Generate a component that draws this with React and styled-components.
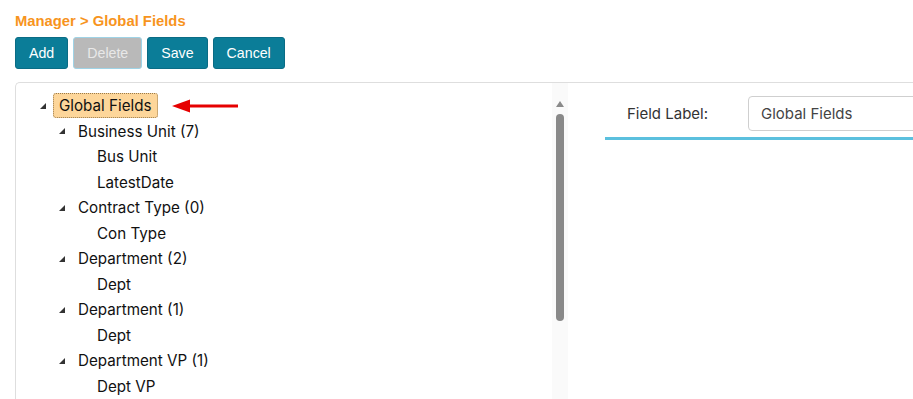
import React from "react";
import styled, { createGlobalStyle } from "styled-components";

const GlobalStyle = createGlobalStyle`
  html, body {
    margin: 0;
    padding: 0;
    background: #fff;
    overflow: hidden;
  }
  body {
    font-family: "Liberation Sans", Arial, sans-serif;
  }
`;

const Page = styled.div`
  padding: 12px 0 0 15px;
  width: 913px;
  height: 399px;
  box-sizing: border-box;
  overflow: hidden;
`;

const Crumb = styled.div`
  font-family: "Liberation Sans", Arial, sans-serif;
  font-weight: bold;
  font-size: 14.8px;
  line-height: 19px;
  color: #f7941d;
`;

const Toolbar = styled.div`
  display: flex;
  gap: 5px;
  margin-top: 6px;
`;

const Button = styled.button`
  height: 32px;
  padding: 0 13px;
  border-radius: 3px;
  font-family: "Liberation Sans", Arial, sans-serif;
  font-size: 14.2px;
  color: ${(p) => (p.disabled ? "#e8e8e8" : "#fff")};
  background: ${(p) => (p.disabled ? "#b9b9b9" : "#0b7d98")};
  border: 1px solid ${(p) => (p.disabled ? "#9fd3e6" : "#0a6c85")};
  cursor: pointer;
`;

const Panel = styled.div`
  margin-top: 13px;
  border: 1px solid #dedede;
  border-right: none;
  border-bottom: none;
  border-top-left-radius: 5px;
  display: flex;
  height: 400px;
  overflow: hidden;
`;

const TreePane = styled.div`
  flex: none;
  width: 536px;
  padding-top: 10px;
  position: relative;
`;

const Row = styled.div`
  display: flex;
  align-items: center;
  height: 25.5px;
  padding-left: ${(p) => 23 + p.$level * 19}px;
  font-family: Inter, "Noto Sans", sans-serif;
  font-size: 15.2px;
  color: #111;
`;

const Toggle = styled.span`
  width: 8px;
  height: 8px;
  margin-right: 8px;
  flex: none;
  visibility: ${(p) => (p.$empty ? "hidden" : "visible")};
  svg {
    display: block;
  }
`;

const Label = styled.span`
  padding: 2px 5px;
  margin-left: -2px;
  line-height: 19px;
  border-radius: 3px;
  background: ${(p) => (p.$selected ? "#fdd69a" : "transparent")};
  border: 1px ${(p) => (p.$selected ? "dotted #9a7a4a" : "solid transparent")};
`;

const Arrow = styled.svg`
  position: absolute;
  left: 155px;
  top: 15px;
`;

const ScrollTrack = styled.div`
  flex: none;
  width: 16px;
  background: #fafafa;
  display: flex;
  flex-direction: column;
  align-items: center;
  padding-top: 18px;
  gap: 7px;
`;

const ScrollThumb = styled.div`
  width: 8px;
  height: 207px;
  border-radius: 4px;
  background: #898989;
`;

const DetailPane = styled.div`
  flex: 1;
  min-width: 0;
  margin-left: 37px;
  padding-top: 13px;
`;

const FieldRow = styled.div`
  display: flex;
  align-items: center;
  padding-left: 22px;
  padding-bottom: 6px;
  border-bottom: 3px solid #5bc0de;
`;

const FieldName = styled.label`
  flex: none;
  width: 121px;
  font-family: Inter, "Noto Sans", sans-serif;
  font-size: 15px;
  color: #333;
`;

const Input = styled.input`
  flex: none;
  width: 240px;
  height: 35px;
  box-sizing: border-box;
  border: 1px solid #cfcfcf;
  border-radius: 4px;
  padding: 0 12px;
  font-family: Inter, "Noto Sans", sans-serif;
  font-size: 15px;
  color: #444;
  outline: none;
`;

const Tri = () => (
  <svg width="8" height="8" viewBox="0 0 8 8">
    <polygon points="7,1 7,7 1,7" fill="#333" />
  </svg>
);

const tree = [
  { level: 0, text: "Global Fields", open: true, selected: true },
  { level: 1, text: "Business Unit (7)", open: true },
  { level: 2, text: "Bus Unit" },
  { level: 2, text: "LatestDate" },
  { level: 1, text: "Contract Type (0)", open: true },
  { level: 2, text: "Con Type" },
  { level: 1, text: "Department (2)", open: true },
  { level: 2, text: "Dept" },
  { level: 1, text: "Department (1)", open: true },
  { level: 2, text: "Dept" },
  { level: 1, text: "Department VP (1)", open: true },
  { level: 2, text: "Dept VP" },
];

export default function App() {
  return (
    <Page>
      <GlobalStyle />
      <Crumb>Manager &gt; Global Fields</Crumb>
      <Toolbar>
        <Button>Add</Button>
        <Button disabled>Delete</Button>
        <Button>Save</Button>
        <Button>Cancel</Button>
      </Toolbar>
      <Panel>
        <TreePane>
          {tree.map((n, i) => (
            <Row key={i} $level={n.level}>
              <Toggle $empty={!n.open}>
                <Tri />
              </Toggle>
              <Label $selected={n.selected}>{n.text}</Label>
            </Row>
          ))}
          <Arrow width="70" height="16" viewBox="0 0 70 16">
            <line x1="16" y1="8" x2="67" y2="8" stroke="#e60000" strokeWidth="3" />
            <polygon points="1,8 19,1.5 19,14.5" fill="#e60000" />
          </Arrow>
        </TreePane>
        <ScrollTrack>
          <svg width="8" height="6" viewBox="0 0 8 6">
            <polygon points="4,0 8,6 0,6" fill="#8a8a8a" />
          </svg>
          <ScrollThumb />
        </ScrollTrack>
        <DetailPane>
          <FieldRow>
            <FieldName>Field Label:</FieldName>
            <Input defaultValue="Global Fields" />
          </FieldRow>
        </DetailPane>
      </Panel>
    </Page>
  );
}
